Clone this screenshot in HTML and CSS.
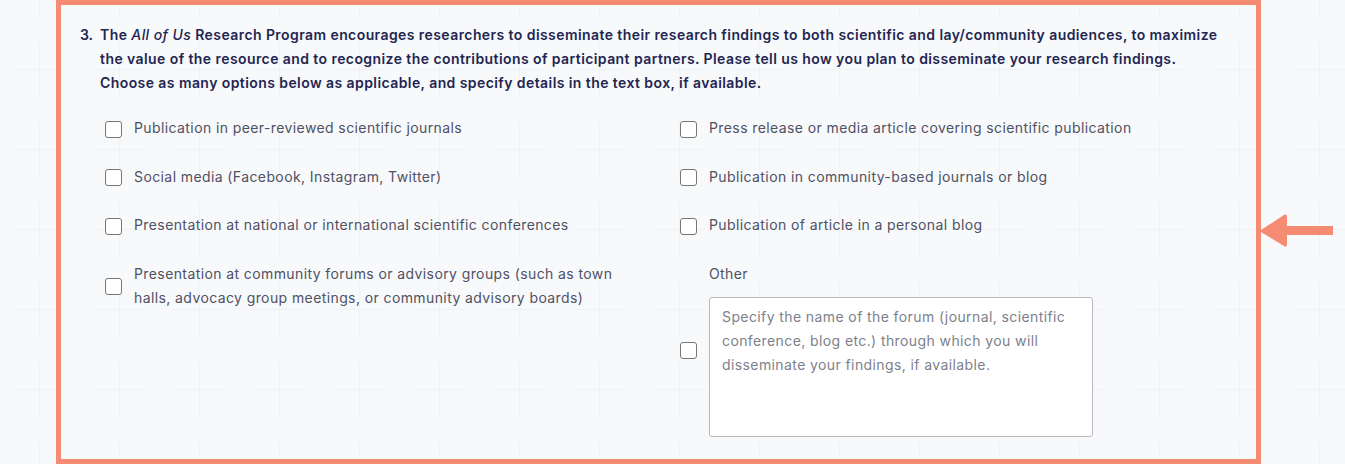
FILE: index.html
```html
<!DOCTYPE html>
<html lang="en">

<head>
    <meta charset="UTF-8" />
    <meta name="viewport" content="width=device-width, initial-scale=1.0" />
    <title>Dissemination - All of Us</title>
    <link rel="stylesheet" href="styles.css">
</head>

<body>
    <div class="page">
        <div class="question-panel">
            <div class="question">
                <span class="question-num">3.</span>
                <p class="question-text">The <em>All of Us</em> Research Program encourages researchers to disseminate their research findings to both scientific and lay/community audiences, to maximize the value of the resource and to recognize the contributions of participant partners. Please tell us how you plan to disseminate your research findings. Choose as many options below as applicable, and specify details in the text box, if available.</p>
            </div>

            <div class="options">
                <label class="option">
                    <span class="box"></span>
                    <span>Publication in peer-reviewed scientific journals</span>
                </label>
                <label class="option">
                    <span class="box"></span>
                    <span>Press release or media article covering scientific publication</span>
                </label>

                <label class="option">
                    <span class="box"></span>
                    <span>Social media (Facebook, Instagram, Twitter)</span>
                </label>
                <label class="option">
                    <span class="box"></span>
                    <span>Publication in community-based journals or blog</span>
                </label>

                <label class="option">
                    <span class="box"></span>
                    <span>Presentation at national or international scientific conferences</span>
                </label>
                <label class="option">
                    <span class="box"></span>
                    <span>Publication of article in a personal blog</span>
                </label>

                <label class="option option-top">
                    <span class="box"></span>
                    <span>Presentation at community forums or advisory groups (such as town halls, advocacy group meetings, or community advisory boards)</span>
                </label>
                <div class="option">
                    <span class="box"></span>
                    <div class="other">
                        <span class="other-label">Other</span>
                        <textarea class="other-text" placeholder="Specify the name of the forum (journal, scientific conference, blog etc.) through which you will disseminate your findings, if available."></textarea>
                    </div>
                </div>
            </div>
        </div>

        <!-- annotation arrow pointing at the panel -->
        <svg class="pointer" width="76" height="40" viewBox="0 0 76 40">
            <path d="M2 18 L25 3 Q28 1 28 5 L28 14 L74 14 L74 23 L28 23 L28 32 Q28 36 25 34 L2 20 Z" fill="#f68b74" />
        </svg>
    </div>
</body>

</html>
```

FILE: styles.css
```css
body {
    margin: 0;
    font-family: Inter, 'Open Sans', sans-serif;
    background-color: #f8f9fb;
    background-image: url("data:image/svg+xml,%3Csvg xmlns='http://www.w3.org/2000/svg' width='80' height='80'%3E%3Cpath d='M13 40.5H67M40.5 13V67' stroke='%23f1f2f5' stroke-width='1.5'/%3E%3C/svg%3E");
    background-position: -1px 29px;
    color: #222650;
    overflow: hidden;
}

.page {
    position: relative;
    height: 464px;
}

.question-panel {
    box-sizing: border-box;
    width: 1205px;
    height: 464px;
    margin-left: 56px;
    padding: 18px 30px 0 19px;
    border: 5px solid #f68b74;
}

.question {
    display: flex;
    font-size: 14px;
    font-weight: 600;
    line-height: 24px;
    letter-spacing: 0.42px;
}

.question-num {
    width: 20px;
    flex-shrink: 0;
    letter-spacing: 0;
}

.question-text {
    margin: 0;
}

.question-text em {
    font-weight: 500;
}

.options {
    display: grid;
    grid-template-columns: 575px 500px;
    row-gap: 24.5px;
    margin: 21px 0 0 25px;
}

.option {
    display: flex;
    align-items: center;
    font-size: 14px;
    line-height: 24px;
    letter-spacing: 0.4px;
    color: #4f5164;
    cursor: pointer;
}

.option-top {
    align-self: start;
    padding-right: 60px;
}

.box {
    box-sizing: border-box;
    width: 17px;
    height: 17px;
    flex-shrink: 0;
    margin: 2px 12px 0 0;
    border: 1.5px solid #767676;
    border-radius: 3px;
    background: #fff;
}

.other {
    display: flex;
    flex-direction: column;
}

.other-label {
    margin-bottom: 11px;
}

.other-text {
    box-sizing: border-box;
    width: 384px;
    height: 140px;
    padding: 7px 12px;
    border: 1px solid #b9b9bd;
    border-radius: 3px;
    background: #fff;
    font-family: inherit;
    font-size: 14px;
    line-height: 24px;
    letter-spacing: 0.4px;
    resize: none;
}

.other-text::placeholder {
    color: #7d7f8c;
}

.pointer {
    position: absolute;
    left: 1259px;
    top: 212px;
}
```
